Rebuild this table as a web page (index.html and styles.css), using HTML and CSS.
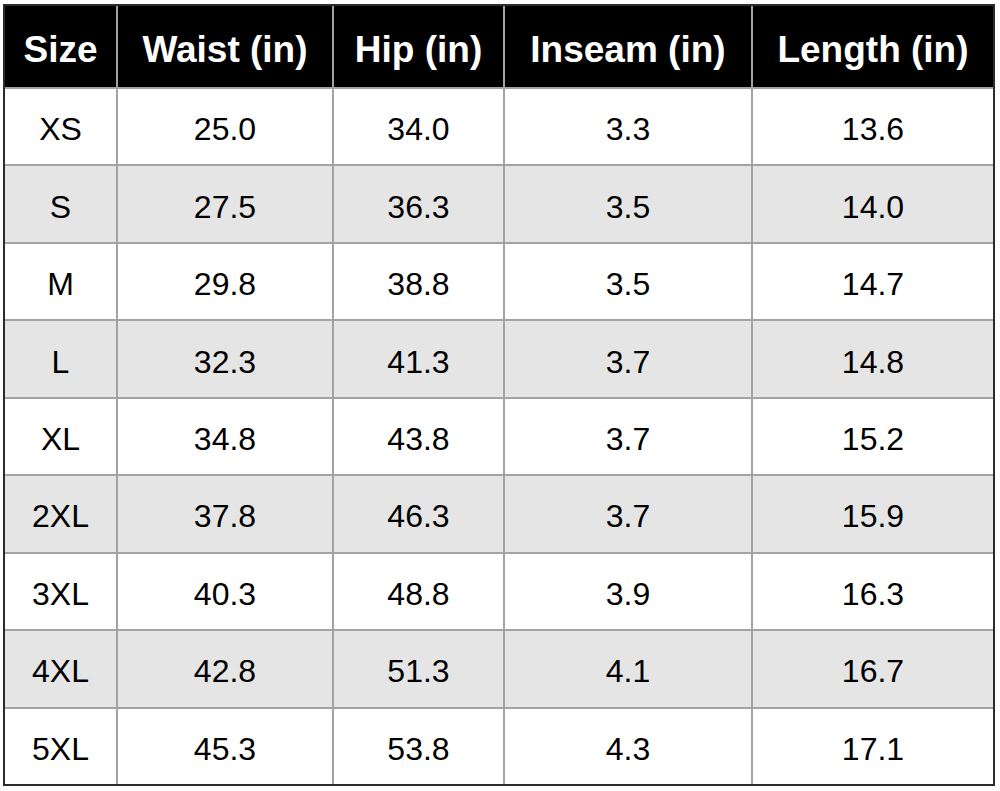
FILE: index.html
```html
<!DOCTYPE html>
<html>
<head>
<meta charset="utf-8">
<link rel="stylesheet" href="styles.css">
</head>
<body>
<div class="wrap">
  <div class="chart">
    <div class="cell head">Size</div>
    <div class="cell head">Waist (in)</div>
    <div class="cell head">Hip (in)</div>
    <div class="cell head">Inseam (in)</div>
    <div class="cell head">Length (in)</div>

    <div class="cell">XS</div><div class="cell">25.0</div><div class="cell">34.0</div><div class="cell">3.3</div><div class="cell">13.6</div>
    <div class="cell alt">S</div><div class="cell alt">27.5</div><div class="cell alt">36.3</div><div class="cell alt">3.5</div><div class="cell alt">14.0</div>
    <div class="cell">M</div><div class="cell">29.8</div><div class="cell">38.8</div><div class="cell">3.5</div><div class="cell">14.7</div>
    <div class="cell alt">L</div><div class="cell alt">32.3</div><div class="cell alt">41.3</div><div class="cell alt">3.7</div><div class="cell alt">14.8</div>
    <div class="cell">XL</div><div class="cell">34.8</div><div class="cell">43.8</div><div class="cell">3.7</div><div class="cell">15.2</div>
    <div class="cell alt">2XL</div><div class="cell alt">37.8</div><div class="cell alt">46.3</div><div class="cell alt">3.7</div><div class="cell alt">15.9</div>
    <div class="cell">3XL</div><div class="cell">40.3</div><div class="cell">48.8</div><div class="cell">3.9</div><div class="cell">16.3</div>
    <div class="cell alt">4XL</div><div class="cell alt">42.8</div><div class="cell alt">51.3</div><div class="cell alt">4.1</div><div class="cell alt">16.7</div>
    <div class="cell">5XL</div><div class="cell">45.3</div><div class="cell">53.8</div><div class="cell">4.3</div><div class="cell">17.1</div>
  </div>
</div>
</body>
</html>
```

FILE: styles.css
```css
html, body {
  margin: 0;
  padding: 0;
  background: #ffffff;
}
.wrap {
  padding: 4px 0 0 3px;
}
.chart {
  box-sizing: border-box;
  width: 992px;
  height: 782px;
  border: 2px solid #2b2b2b;
  background: #a3a3a3;
  display: grid;
  grid-template-columns: 111px 214px 169px 246px 240px;
  grid-template-rows: 81px repeat(9, 1fr);
  gap: 2px;
  font-family: "Liberation Sans", Arial, sans-serif;
}
.cell {
  background: #ffffff;
  color: #000000;
  font-size: 32px;
  display: flex;
  align-items: center;
  justify-content: center;
  padding-top: 6px;
}
.cell.alt {
  background: #e5e5e5;
}
.cell.head {
  background: #000000;
  color: #ffffff;
  font-weight: bold;
  font-size: 37px;
  padding-top: 6px;
}
```
